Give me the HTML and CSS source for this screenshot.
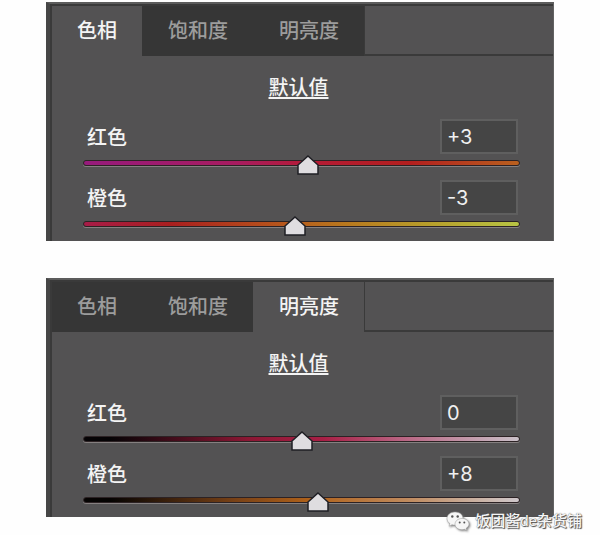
FILE: index.html
```html
<!DOCTYPE html>
<html lang="zh-CN">
<head>
  <meta charset="UTF-8">
  <meta name="viewport" content="width=device-width, initial-scale=1">
  <title>色相 / 明亮度</title>
  <link rel="stylesheet" href="styles.css">
</head>
<body>
  <main class="page">
    <section class="panel">
      <div class="tabs">
        <button class="tab active" type="button">色相</button>
        <button class="tab" type="button">饱和度</button>
        <button class="tab" type="button">明亮度</button>
        <div class="tabs-rest"></div>
      </div>
      <a class="reset" href="#">默认值</a>
      <div class="controls">
        <div class="control">
          <div class="control-head">
            <label for="hueRed">红色</label>
            <input class="value" type="text" id="hueRedValue" aria-label="红色" value="+3">
          </div>
          <input class="slider hue-red" type="range" id="hueRed" min="-100" max="100" value="3">
        </div>
        <div class="control">
          <div class="control-head">
            <label for="hueOrange">橙色</label>
            <input class="value" type="text" id="hueOrangeValue" aria-label="橙色" value="-3">
          </div>
          <input class="slider hue-orange" type="range" id="hueOrange" min="-100" max="100" value="-3">
        </div>
      </div>
    </section>

    <section class="panel">
      <div class="tabs">
        <button class="tab" type="button">色相</button>
        <button class="tab" type="button">饱和度</button>
        <button class="tab active" type="button">明亮度</button>
        <div class="tabs-rest"></div>
      </div>
      <a class="reset" href="#">默认值</a>
      <div class="controls">
        <div class="control">
          <div class="control-head">
            <label for="lumRed">红色</label>
            <input class="value" type="text" id="lumRedValue" aria-label="红色" value="0">
          </div>
          <input class="slider lum-red" type="range" id="lumRed" min="-100" max="100" value="0">
        </div>
        <div class="control">
          <div class="control-head">
            <label for="lumOrange">橙色</label>
            <input class="value" type="text" id="lumOrangeValue" aria-label="橙色" value="+8">
          </div>
          <input class="slider lum-orange" type="range" id="lumOrange" min="-100" max="100" value="8">
        </div>
      </div>
    </section>

    <div class="watermark">
      <svg class="wechat" viewBox="0 0 24 20" aria-hidden="true">
        <path class="bubble" d="M9 1C4.500 1 1 3.900 1 7.500c0 2.100 1.100 3.900 2.900 5.100L3 15.200l3-1.500c1 .3 2 .4 3 .4 4.500 0 8-2.900 8-6.600S13.500 1 9 1z"/>
        <circle class="eye" cx="6.300" cy="5.500" r="1.200"/>
        <circle class="eye" cx="11.700" cy="5.500" r="1.200"/>
        <path class="bubble" d="M16 7.500c-3.900 0-7 2.500-7 5.600s3.100 5.600 7 5.600c.9 0 1.700-.1 2.500-.4l2.300 1.200-.6-2.200c1.700-1 2.800-2.500 2.800-4.200 0-3.100-3.100-5.600-7-5.600z"/>
        <circle class="eye" cx="13.700" cy="11.500" r="1"/>
        <circle class="eye" cx="18.300" cy="11.500" r="1"/>
      </svg>
      <span>饭团酱de杂货铺</span>
    </div>
  </main>
</body>
</html>
```

FILE: styles.css
```css
* {
  box-sizing: border-box;
}

body {
  margin: 0;
  background: #fefefe;
  font-family: "Liberation Sans", "Noto Sans CJK SC", sans-serif;
  font-size: 20px;
  color: #f4f4f4;
}

.page {
  position: relative;
  display: flex;
  flex-direction: column;
  gap: 37px;
  padding: 2px 46px 18px;
}

.panel {
  display: flex;
  flex-direction: column;
  padding-bottom: 8px;
  background: #535253;
  border-top: 2px solid #5c5c5c;
  border-left: 4px solid #464646;
  border-right: 1px solid #626262;
  box-shadow: inset 2px 2px 0 #3a3a3a;
}

.tabs {
  display: flex;
  height: 52px;
  padding: 2px 0 0 2px;
}

.tab {
  padding: 0 25px 0 26px;
  border: 0;
  background: #363636;
  color: #9c9c9c;
  font: inherit;
  font-weight: 500;
  line-height: 30px;
  cursor: pointer;
}

.tab:first-child {
  padding-left: 25px;
}

.tab.active {
  background: transparent;
  color: #f4f4f4;
}

.tabs-rest {
  flex: 1;
  border-left: 1px solid #3a3a3a;
  border-bottom: 2px solid #3a3a3a;
}

.reset {
  align-self: center;
  margin: 17px 6px 16px 0;
  color: #f4f4f4;
  font-weight: 500;
  line-height: 30px;
  text-decoration-thickness: 2px;
  text-underline-offset: 2px;
}

.controls {
  display: flex;
  flex-direction: column;
  gap: 8px;
  padding: 0 33px;
}

.control {
  display: flex;
  flex-direction: column;
}

.control-head {
  display: flex;
  justify-content: space-between;
  align-items: center;
  padding: 0 2px 0 4px;
  font-weight: 500;
}

.value {
  width: 78px;
  height: 35px;
  padding: 0 5px;
  border: 2px solid #5f5f5f;
  background: #454545;
  color: #f0f0f0;
  font-family: Inter, sans-serif;
  font-size: 20px;
}

.slider {
  -webkit-appearance: none;
  appearance: none;
  width: 100%;
  height: 18px;
  margin: 0;
  background: transparent;
}

.slider::-webkit-slider-runnable-track {
  height: 6px;
  border: 1px solid #2c2224;
  border-radius: 3px;
  background: var(--ramp);
  box-shadow: 0 1px 0 #858080;
}

.slider::-webkit-slider-thumb {
  -webkit-appearance: none;
  width: 22px;
  height: 20px;
  margin-top: -6px;
  background: url("data:image/svg+xml,%3Csvg xmlns='http://www.w3.org/2000/svg' viewBox='0 0 22 20'%3E%3Cpath d='M11 1L21 10V19H1V10Z' fill='%23dfdde0' stroke='%231f1f24' stroke-width='1.500'/%3E%3C/svg%3E") no-repeat;
}

.hue-red {
  --ramp: linear-gradient(90deg, #961b7c, #a81c60 35%, #b51b35 52%, #b31f1e 75%, #b9601e);
}

.hue-orange {
  --ramp: linear-gradient(90deg, #a81c48, #aa1f1f 20%, #b54a1c 40%, #b9781e 60%, #b8a02c 80%, #b8c444);
}

.lum-red {
  --ramp: linear-gradient(90deg, #050305 6%, #8c1734 38%, #a81f45 55%, #b8607f 72%, #c9c0c8);
}

.lum-orange {
  --ramp: linear-gradient(90deg, #050302 6%, #7a4216 35%, #b0621a 52%, #c08c60 75%, #cfc8cc);
}

/* sits over the corner of the lower panel */
.watermark {
  position: absolute;
  right: 18px;
  bottom: 3px;
  display: flex;
  align-items: center;
  gap: 5px;
  color: #f6f6f6;
  font-size: 15px;
  font-weight: 500;
  line-height: 22px;
  text-shadow: 1px 1px 1px #444, 0 0 1px #555;
}

.wechat {
  width: 24px;
  height: 20px;
  filter: drop-shadow(1px 1px 1px #777);
}

.bubble {
  fill: #f6f6f6;
  stroke: #999;
  stroke-width: 0.5;
}

.eye {
  fill: #555;
}
```
